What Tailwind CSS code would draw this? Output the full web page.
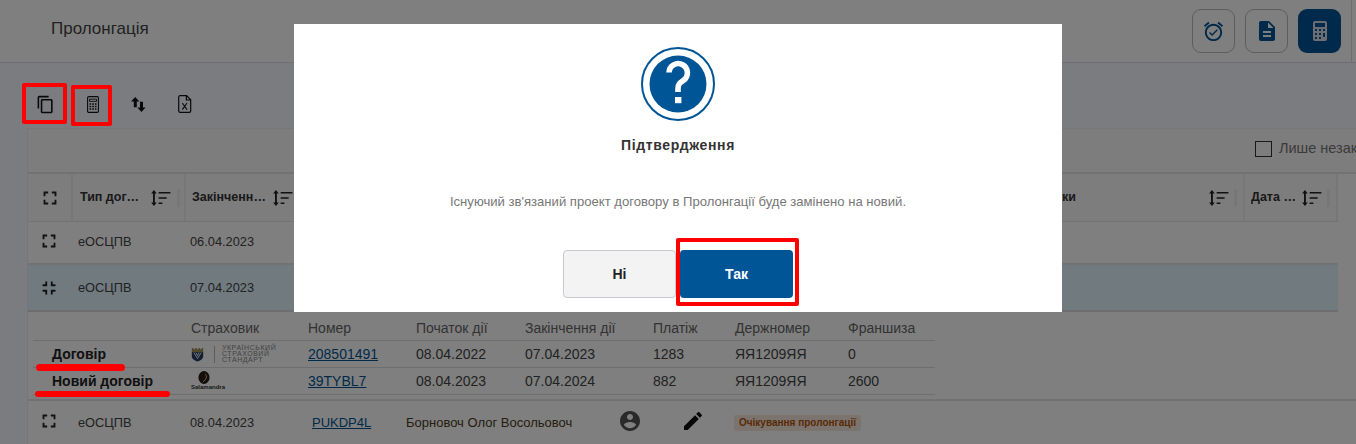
<!DOCTYPE html>
<html lang="uk">
<head>
<meta charset="utf-8">
<script src="https://cdn.jsdelivr.net/npm/@tailwindcss/browser@4"></script>
<title>Пролонгація</title>
</head>
<body class="m-0 overflow-hidden font-['Liberation_Sans',Arial,sans-serif]">
<div class="relative w-[1356px] h-[444px] overflow-hidden bg-[#f6f9ff] text-[#333]">

  <!-- page -->
  <header class="h-[63px] bg-white border-b border-[#dcdce6] flex items-center pl-[51px] pr-[4px]">
    <h1 class="text-[17px] text-[#444] flex-1 font-normal pb-[4px]">Пролонгація</h1>
    <div class="flex gap-[10px] pr-[10px] h-full items-center border-r border-[#ddd]">
      <button class="w-[43px] h-[44px] rounded-[9px] border border-[#bbb] flex items-center justify-center">
        <svg viewBox="0 0 24 24" class="w-[23px] h-[23px] fill-[#005596]"><path d="M22 5.72l-4.6-3.86-1.29 1.53 4.6 3.86L22 5.72zM7.88 3.39L6.6 1.86 2 5.71l1.29 1.53 4.59-3.85zM12 4c-4.97 0-9 4.03-9 9s4.02 9 9 9c4.97 0 9-4.03 9-9s-4.03-9-9-9zm0 16c-3.87 0-7-3.13-7-7s3.13-7 7-7 7 3.13 7 7-3.13 7-7 7zm-1.46-5.47L8.41 12.4l-1.06 1.06 3.18 3.18 6-6-1.06-1.06-4.93 4.95z"/></svg>
      </button>
      <button class="w-[43px] h-[44px] rounded-[9px] border border-[#bbb] flex items-center justify-center">
        <svg viewBox="0 0 24 24" class="w-[24px] h-[24px] fill-[#005596]"><path d="M14 2H6c-1.1 0-1.99.9-1.99 2L4 20c0 1.1.89 2 1.99 2H18c1.1 0 2-.9 2-2V8l-6-6zm2 16H8v-2h8v2zm0-4H8v-2h8v2zm-3-5V3.5L18.5 9H13z"/></svg>
      </button>
      <button class="w-[43px] h-[44px] rounded-[9px] bg-[#005596] flex items-center justify-center">
        <svg viewBox="0 0 24 24" class="w-[24px] h-[24px] fill-[#d8dde2]"><path d="M7,2H17A2,2 0 0,1 19,4V20A2,2 0 0,1 17,22H7A2,2 0 0,1 5,20V4A2,2 0 0,1 7,2M7,4V8H17V4H7M7,10V12H9V10H7M11,10V12H13V10H11M15,10V12H17V10H15M7,14V16H9V14H7M11,14V16H13V14H11M15,14V18H17V14H15M7,18V20H9V18H7M11,18V20H13V18H11Z"/></svg>
      </button>
    </div>
  </header>

  <!-- toolbar -->
  <div class="h-[65px] flex items-center pl-[36px] pt-[17px] text-[#111]">
    <svg viewBox="0 0 24 24" class="w-[19px] h-[19px] fill-[#111]"><path d="M16 1H4c-1.1 0-2 .9-2 2v14h2V3h12V1zm3 4H8c-1.1 0-2 .9-2 2v14c0 1.1.9 2 2 2h11c1.1 0 2-.9 2-2V7c0-1.1-.9-2-2-2zm0 16H8V7h11v14z"/></svg>
    <svg viewBox="0 0 12 17" class="ml-[32px] w-[12px] h-[17px] fill-none stroke-[#111]" stroke-width="1.1"><rect x=".6" y=".6" width="10.8" height="15.8" rx="1.2"/><path d="M2.5 3.2h7v2.2h-7z" stroke-width=".9"/><path d="M2.5 8h7M2.5 10.5h7M2.5 13h7" stroke-width="1.3" stroke-dasharray="1.7 1"/></svg>
    <svg viewBox="0 0 15 15" class="ml-[32px] w-[15px] h-[15px] fill-[#111]"><path d="M4.2 0L8.4 4.6H5.8V10.2H2.8V4.6H0Z"/><path d="M10.4 15L6.4 10.4H9V4.8H12V10.4H14.6Z"/></svg>
    <svg viewBox="0 0 14 18" class="ml-[32px] w-[14px] h-[18px] fill-none stroke-[#111]" stroke-width="1.2"><path d="M1.6.7H8.6L12.7 4.8V16a1.3 1.3 0 0 1-1.3 1.3H1.9A1.3 1.3 0 0 1 .7 16V2A1.3 1.3 0 0 1 1.6.7ZM8.4.7V5H12.7"/><path d="M4.3 8L9 14.6M9 8L4.3 14.6" stroke-width="1.1"/></svg>
  </div>

  <!-- card -->
  <div class="ml-[27px] bg-white border-t border-l border-[#eeeef2] text-[12.8px]">
    <div class="h-[45px] flex items-center justify-end border-b-2 border-[#e4e4e4] bg-[#fafafa] overflow-hidden">
      <div class="flex items-center w-[101px] shrink-0 pb-[3px] whitespace-nowrap">
        <span class="w-[17px] h-[16px] border border-[#333] shrink-0"></span>
        <span class="ml-[7px] text-[14.5px] text-[#777]">Лише незакриті</span>
      </div>
    </div>

    <!-- header row -->
    <div class="w-[1310px] h-[48px] flex items-center font-bold text-[12.5px] text-[#333] border-b border-[#e6e6e6] bg-[#fafafa]">
      <div class="w-[45px] h-full shrink-0 flex items-center justify-center border-r-2 border-[#eee]">
        <svg viewBox="0 0 24 24" class="w-[22px] h-[22px] fill-[#222]"><path d="M7 14H5v5h5v-2H7v-3zm-2-4h2V7h3V5H5v5zm12 7h-3v2h5v-5h-2v3zM14 5v2h3v3h2V5h-5z"/></svg>
      </div>
      <div class="w-[113px] h-full shrink-0 flex items-center pl-[7px] border-r-2 border-[#eee]">
        <span class="w-[64px] truncate">Тип договору</span>
        <svg viewBox="0 0 21 17" class="ml-[7px] w-[20px] h-[16px] fill-[#222] shrink-0"><path d="M3 0L6 3.6H4V13.4H6L3 17L0 13.4H2V3.6H0Z"/><path d="M8 2H20.5V3.6H8ZM8 7.6H16.5V9.2H8ZM8 13.2H12V14.8H8Z"/></svg>
        <span class="ml-[6px] w-[3px] h-[18px] bg-[#eee] shrink-0"></span>
      </div>
      <div class="w-[112px] h-full shrink-0 flex items-center pl-[6px]">
        <span class="w-[79px] truncate">Закінчення дії</span>
        <svg viewBox="0 0 21 17" class="ml-[2px] w-[20px] h-[16px] fill-[#222] shrink-0"><path d="M3 0L6 3.6H4V13.4H6L3 17L0 13.4H2V3.6H0Z"/><path d="M8 2H20.5V3.6H8ZM8 7.6H16.5V9.2H8ZM8 13.2H12V14.8H8Z"/></svg>
      </div>
      <div class="w-[947px] h-full shrink-0 flex items-center justify-end pr-[6px] border-r-2 border-[#eee]">
        <span>Примітки</span>
        <svg viewBox="0 0 21 17" class="ml-[133px] w-[20px] h-[16px] fill-[#222] shrink-0"><path d="M3 0L6 3.6H4V13.4H6L3 17L0 13.4H2V3.6H0Z"/><path d="M8 2H20.5V3.6H8ZM8 7.6H16.5V9.2H8ZM8 13.2H12V14.8H8Z"/></svg>
        <span class="ml-[5px] w-[3px] h-[18px] bg-[#eee] shrink-0"></span>
      </div>
      <div class="w-[93px] h-full shrink-0 flex items-center pl-[6px] border-r-2 border-[#eee]">
        <span class="w-[47px] truncate">Дата оновлення</span>
        <svg viewBox="0 0 21 17" class="ml-[4px] w-[20px] h-[16px] fill-[#222] shrink-0"><path d="M3 0L6 3.6H4V13.4H6L3 17L0 13.4H2V3.6H0Z"/><path d="M8 2H20.5V3.6H8ZM8 7.6H16.5V9.2H8ZM8 13.2H12V14.8H8Z"/></svg>
        <span class="ml-[5px] w-[3px] h-[18px] bg-[#eee] shrink-0"></span>
      </div>
    </div>

    <!-- rows -->
    <div class="w-[1310px] h-[43px] flex items-center border-b-2 border-[#e4e4e4] text-[#444]">
      <div class="w-[42px] shrink-0 flex justify-center -mt-[3px]">
        <svg viewBox="0 0 24 24" class="w-[22px] h-[22px] fill-[#222]"><path d="M7 14H5v5h5v-2H7v-3zm-2-4h2V7h3V5H5v5zm12 7h-3v2h5v-5h-2v3zM14 5v2h3v3h2V5h-5z"/></svg>
      </div>
      <div class="w-[120px] pl-[8px] shrink-0 -mt-[2px]">еОСЦПВ</div>
      <div class="-mt-[2px]">06.04.2023</div>
    </div>
    <div class="w-[1310px] h-[47px] flex items-center border-b-2 border-[#dcdcdc] bg-[#e0f4ff] text-[#444]">
      <div class="w-[42px] shrink-0 flex justify-center">
        <svg viewBox="0 0 24 24" class="w-[22px] h-[22px] fill-[#222]"><path d="M5 16h3v3h2v-5H5v2zm3-8H5v2h5V5H8v3zm6 11h2v-3h3v-2h-5v5zm2-11V5h-2v5h5V8h-3z"/></svg>
      </div>
      <div class="w-[120px] pl-[8px] shrink-0">еОСЦПВ</div>
      <div>07.04.2023</div>
    </div>

    <!-- nested table -->
    <div class="h-[89px] pl-[5px] bg-white border-b-2 border-[#e4e4e4] text-sm text-[#444]">
      <div class="w-[902px]">
        <div class="h-[29px] flex items-center border-b border-[#ddd] text-[#666] pt-[4px]">
          <div class="w-[158px]"></div><div class="w-[117px]">Страховик</div><div class="w-[108px]">Номер</div><div class="w-[109px]">Початок дії</div><div class="w-[128px]">Закінчення дії</div><div class="w-[82px]">Платіж</div><div class="w-[113px]">Держномер</div><div>Франшиза</div>
        </div>
        <div class="h-[27px] flex items-center border-b border-[#ddd]">
          <div class="w-[158px] pl-[19px] font-bold text-[#222]">Договір</div>
          <div class="w-[117px] flex items-center">
            <svg viewBox="0 0 16 18" class="w-[13px] h-[17px] shrink-0"><path d="M1 1H3V2.6H5V1H7V2.6H9V1H11V2.6H13V1H15V6H1Z" fill="#a5905a"/><path d="M1 6H15V11C15 14.5 11 16.4 8 17.6C5 16.4 1 14.5 1 11Z" fill="#2a3f66"/><path d="M3.4 6.5L8 14L12.6 6.5M6 6.5L8 10.5L10 6.5" fill="none" stroke="#fff" stroke-width="1.1"/></svg>
            <span class="w-px h-[17px] bg-[#bbb] ml-[10px] mr-[7px] shrink-0"></span>
            <span class="text-[7px] leading-[6px] text-[#888] tracking-[.55px] whitespace-nowrap">УКРАЇНСЬКИЙ<br>СТРАХОВИЙ<br>СТАНДАРТ</span>
          </div>
          <div class="w-[108px]"><a class="underline text-[#005596]">208501491</a></div>
          <div class="w-[109px]">08.04.2022</div><div class="w-[128px]">07.04.2023</div><div class="w-[82px]">1283</div><div class="w-[113px]">ЯЯ1209ЯЯ</div><div>0</div>
        </div>
        <div class="h-[27px] flex items-center border-b border-[#ddd]">
          <div class="w-[158px] pl-[19px] font-bold text-[#222]">Новий договір</div>
          <div class="w-[117px] flex flex-col items-start -mt-[1px]">
            <svg viewBox="0 0 12 14" class="ml-[7px] w-[12px] h-[13px] shrink-0"><ellipse cx="6" cy="7" rx="6" ry="7" fill="#2a1c14"/><path d="M7.5 3.5C10 6 8 9.5 5 11.5" fill="none" stroke="#d9c9a8" stroke-width="1"/></svg>
            <span class="text-[6px] leading-[6px] font-bold text-[#333]">Salamandra</span>
          </div>
          <div class="w-[108px]"><a class="underline text-[#005596]">39TYBL7</a></div>
          <div class="w-[109px]">08.04.2023</div><div class="w-[128px]">07.04.2024</div><div class="w-[82px]">882</div><div class="w-[113px]">ЯЯ1209ЯЯ</div><div>2600</div>
        </div>
      </div>
    </div>

    <div class="h-[44px] flex items-center text-[#444] bg-white">
      <div class="w-[42px] shrink-0 flex justify-center -mt-[4px]">
        <svg viewBox="0 0 24 24" class="w-[22px] h-[22px] fill-[#222]"><path d="M7 14H5v5h5v-2H7v-3zm-2-4h2V7h3V5H5v5zm12 7h-3v2h5v-5h-2v3zM14 5v2h3v3h2V5h-5z"/></svg>
      </div>
      <div class="w-[120px] pl-[8px] shrink-0">еОСЦПВ</div>
      <div class="w-[122px] shrink-0">08.04.2023</div>
      <div class="w-[94px] shrink-0 text-[13px]"><a class="underline text-[#005596]">PUKDP4L</a></div>
      <div class="w-[212px] shrink-0 text-[#4a3a20] text-[13px]">Борновоч Олог Восольовоч</div>
      <svg viewBox="0 0 24 24" class="w-[24px] h-[24px] fill-[#555] -mt-[5px] shrink-0"><path d="M12 2C6.48 2 2 6.48 2 12s4.48 10 10 10 10-4.48 10-10S17.52 2 12 2zm0 3c1.66 0 3 1.34 3 3s-1.34 3-3 3-3-1.34-3-3 1.34-3 3-3zm0 14.2c-2.5 0-4.71-1.28-6-3.22.03-1.99 4-3.08 6-3.08 1.99 0 5.97 1.09 6 3.08-1.29 1.94-3.5 3.22-6 3.22z"/></svg>
      <svg viewBox="0 0 24 24" class="ml-[39px] w-[24px] h-[24px] fill-[#111] -mt-[5px] shrink-0"><path d="M3 17.25V21h3.75L17.81 9.94l-3.75-3.75L3 17.25zM20.71 7.04c.39-.39.39-1.02 0-1.41l-2.34-2.34c-.39-.39-1.02-.39-1.41 0l-1.83 1.83 3.75 3.75 1.83-1.83z"/></svg>
      <span class="ml-[29px] px-[5px] py-[2px] rounded-[2px] bg-[#f7e9dc] text-[#b4540a] font-bold text-[10px] leading-[12px]">Очікування пролонгації</span>
    </div>
  </div>

  <!-- backdrop -->
  <div class="absolute inset-0 bg-black/50"></div>

  <!-- modal -->
  <div class="absolute left-[294px] top-[24px] w-[768px] h-[288px] bg-white flex flex-col items-center">
    <svg viewBox="-37 -37 74 74" class="mt-[23px] w-[74px] h-[74px] shrink-0">
      <circle r="36" fill="none" stroke="#005596" stroke-width="2"/>
      <circle r="28.5" fill="#005596"/>
      <path d="M-9 -11.5A9.2 9.2 0 1 1 5.4 -3.6C2 -1.2 0 0 0 4.5V8" fill="none" stroke="#fff" stroke-width="5.6"/>
      <rect x="-3" y="13" width="6.4" height="6.2" fill="#fff"/>
    </svg>
    <h2 class="mt-[14px] text-sm leading-[20px] font-bold text-[#333] tracking-[.65px]">Підтвердження</h2>
    <p class="mt-[38px] text-[13.1px] leading-[18px] text-[#777]">Існуючий зв'язаний проект договору в Пролонгації буде замінено на новий.</p>
    <div class="mt-[39px] flex gap-[4px]">
      <button class="w-[113px] h-[48px] rounded-[4px] border border-[#c8c8d2] bg-[#f3f3f3] text-sm font-bold text-[#222]">Ні</button>
      <button class="w-[113px] h-[48px] rounded-[4px] bg-[#005596] text-sm font-bold text-white">Так</button>
    </div>
  </div>

  <!-- red annotations -->
  <div class="absolute left-[22px] top-[83px] w-[45px] h-[41px] border-[4px] border-[#ff0000] rounded-[2px]"></div>
  <div class="absolute left-[71px] top-[85px] w-[41px] h-[41px] border-[4px] border-[#ff0000] rounded-[2px]"></div>
  <div class="absolute left-[676px] top-[238px] w-[123px] h-[68px] border-[4px] border-[#ff0000] rounded-[2px]"></div>
  <div class="absolute left-[36px] top-[364px] w-[89px] h-[7px] bg-[#ff0000] rounded-full"></div>
  <div class="absolute left-[35px] top-[391px] w-[135px] h-[6px] bg-[#ff0000] rounded-full"></div>
</div>
</body>
</html>
